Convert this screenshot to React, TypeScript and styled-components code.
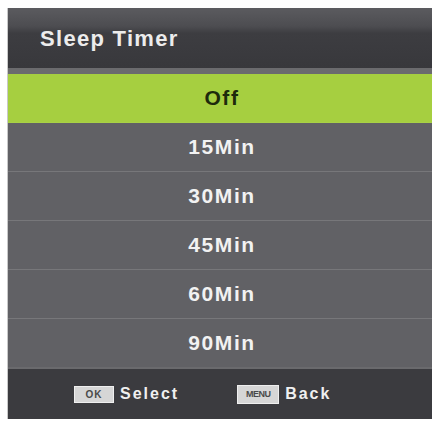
import styled, { createGlobalStyle } from "styled-components"
import { useState } from "react"

const options = ["Off", "15Min", "30Min", "45Min", "60Min", "90Min"]

const App = () => {

    const [ selected ] = useState(0);

  return (
    <>
        <GlobalStyle />
        <Panel>
            <Header>
                <Title>Sleep Timer</Title>
            </Header>
            <List>
                {options.map((label, i) => (
                    <Row key={label} $active={i === selected}>{label}</Row>
                ))}
            </List>
            <Footer>
                <Hint>
                    <Key $wide={false}>OK</Key>
                    <HintLabel>Select</HintLabel>
                </Hint>
                <Hint>
                    <Key $wide={true}>MENU</Key>
                    <HintLabel>Back</HintLabel>
                </Hint>
            </Footer>
        </Panel>
    </>
  )
}

export default App

const GlobalStyle = createGlobalStyle`
    body {
        margin: 0;
        background: #ffffff;
        font-family: "Liberation Sans", Arial, sans-serif;
    }
`

const Panel = styled.div`
    display: flex;
    flex-direction: column;
    margin: 8px 2px 0 8px;
    width: 424px;
    background: #5f5f63;
    box-shadow: -1px 0 0 #c9c9c9;
`

const Header = styled.div`
    display: flex;
    align-items: center;
    height: 60px;
    padding: 0 0 0 32px;
    background: linear-gradient(180deg, #5b5b5f 0%, #4d4d51 30%, #3d3d41 42%, #38383c 100%);
    border-bottom: 6px solid #6b6b6e;
`

const Title = styled.span`
    color: #ececec;
    font-size: 22px;
    font-weight: 700;
    letter-spacing: 1.3px;
    margin-top: 2px;
`

const List = styled.div`
    display: flex;
    flex-direction: column;
`

const Row = styled.div<{ $active: boolean }>`
    display: flex;
    align-items: center;
    justify-content: center;
    height: 48px;
    padding-left: 4px;
    border-bottom: 1px solid ${p => p.$active ? "#a9d146" : "#77777a"};
    background: ${p => p.$active ? "#a6cf40" : "#616165"};
    color: ${p => p.$active ? "#1d2a0c" : "#f2f2f2"};
    font-size: 21px;
    font-weight: 700;
    letter-spacing: 1.6px;

    &:last-child {
        border-bottom: none;
    }
`

const Footer = styled.div`
    display: flex;
    align-items: center;
    gap: 58px;
    height: 50px;
    padding-left: 66px;
    background: #3b3b3f;
    border-top: 2px solid #6a6a6d;
`

const Hint = styled.div`
    display: flex;
    align-items: center;
    gap: 6px;
`

const Key = styled.span<{ $wide: boolean }>`
    display: inline-flex;
    align-items: center;
    justify-content: center;
    width: ${p => p.$wide ? "40px" : "38px"};
    height: ${p => p.$wide ? "17px" : "15px"};
    background: #d6d6d6;
    border: 1px solid #efefef;
    color: #4a4a4a;
    font-size: ${p => p.$wide ? "9px" : "10px"};
    font-weight: 700;
    letter-spacing: ${p => p.$wide ? "-0.5px" : "1px"};
`

const HintLabel = styled.span`
    color: #f0f0f0;
    font-size: 16px;
    font-weight: 700;
    letter-spacing: 2px;
`
